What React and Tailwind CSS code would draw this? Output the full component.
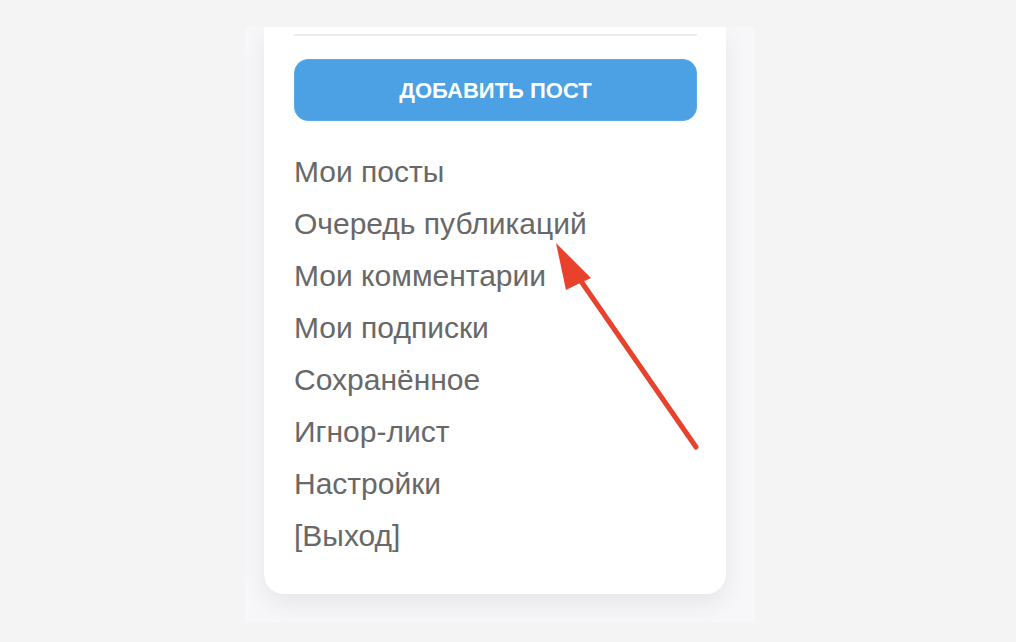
export default function App() {
  const items = [
    "Мои посты",
    "Очередь публикаций",
    "Мои комментарии",
    "Мои подписки",
    "Сохранённое",
    "Игнор-лист",
    "Настройки",
    "[Выход]",
  ];
  return (
    <div
      className="relative w-[1016px] h-[642px] bg-[#f4f4f4] overflow-hidden"
      style={{ fontFamily: '"Liberation Sans", Arial, sans-serif' }}
    >
      <div className="pt-[27px] pl-[245px]">
        <div className="w-[510px] h-[595px] bg-[#f7f7f9] overflow-hidden">
          <div className="ml-[19px] w-[462px] h-[567px] bg-white rounded-b-[20px] shadow-[0_10px_24px_rgba(0,0,0,0.07)] pl-[30px] pr-[29px] pt-[7px]">
            <div className="h-[2px] bg-[#ececec]" />
            <button className="mt-[23px] w-full h-[62px] rounded-[14px] bg-[#4ba1e3] border border-[#5aaae8] text-white font-bold text-[22px] uppercase">
              Добавить пост
            </button>
            <ul className="mt-[25px]">
              {items.map((t) => (
                <li key={t} className="h-[52px] leading-[52px] text-[30px] text-[#686868]">
                  {t}
                </li>
              ))}
            </ul>
          </div>
        </div>
      </div>
      <svg
        className="absolute left-0 top-0 pointer-events-none"
        width="1016"
        height="642"
        viewBox="0 0 1016 642"
      >
        <line
          x1="696"
          y1="447"
          x2="576"
          y2="274"
          stroke="#e8412c"
          strokeWidth="5"
          strokeLinecap="round"
        />
        <polygon points="556,243 591,278 574,286 566,290" fill="#e8412c" />
      </svg>
    </div>
  );
}
